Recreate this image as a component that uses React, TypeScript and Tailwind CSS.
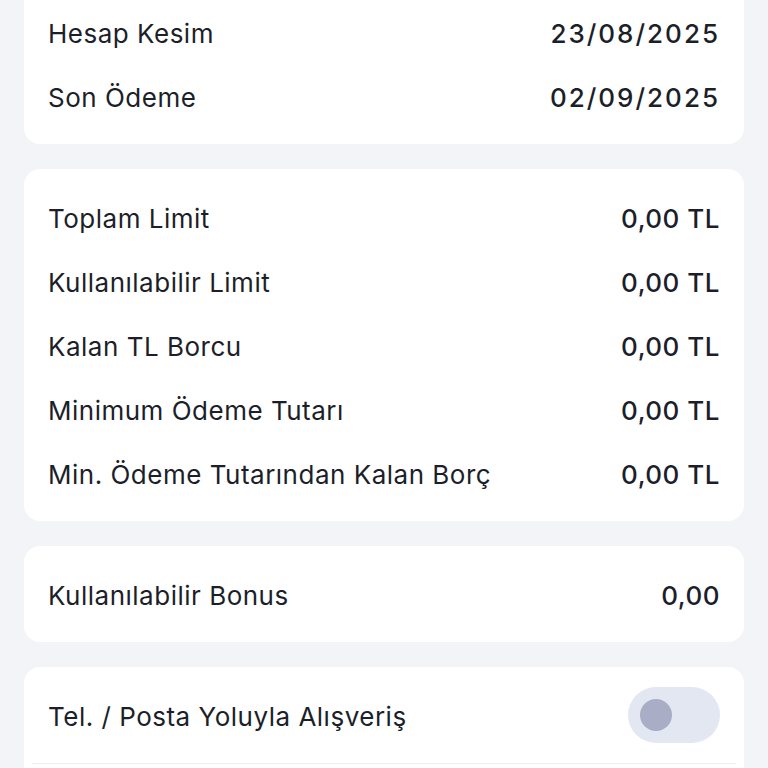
const rows1 = [
  { label: 'Hesap Kesim', value: '23/08/2025' },
  { label: 'Son Ödeme', value: '02/09/2025' },
];

const rows2 = [
  { label: 'Toplam Limit', value: '0,00 TL' },
  { label: 'Kullanılabilir Limit', value: '0,00 TL' },
  { label: 'Kalan TL Borcu', value: '0,00 TL' },
  { label: 'Minimum Ödeme Tutarı', value: '0,00 TL' },
  { label: 'Min. Ödeme Tutarından Kalan Borç', value: '0,00 TL' },
];

const Row = ({ label, value, wide }: { label: string; value: string; wide?: boolean }) => (
  <div className="flex h-16 items-center justify-between px-6 pt-[2px]">
    <span className="text-[26px] tracking-[0.5px] text-[#1c1f2a]">{label}</span>
    <span
      className={`text-[26px] font-medium text-[#1c1f2a] ${wide ? 'tracking-[2px]' : 'tracking-[0.5px]'}`}
    >
      {value}
    </span>
  </div>
);

const Card = ({ children, className = '' }: { children: React.ReactNode; className?: string }) => (
  <div className={`rounded-2xl bg-white py-4 ${className}`}>{children}</div>
);

export default function App() {
  return (
    <div
      className="h-[768px] overflow-hidden bg-[#f3f4f8] px-6"
      style={{ fontFamily: 'Inter, "Noto Sans", sans-serif' }}
    >
      <div className="-mt-[16px] flex flex-col gap-[25px]">
        <Card>
          {rows1.map((r) => (
            <Row key={r.label} {...r} wide />
          ))}
        </Card>
        <Card>
          {rows2.map((r) => (
            <Row key={r.label} {...r} />
          ))}
        </Card>
        <Card>
          <Row label="Kullanılabilir Bonus" value="0,00" />
        </Card>
        <Card className="pb-0">
          <div className="flex h-16 items-center justify-between px-6">
            <span className="pt-[2px] text-[26px] tracking-[0.5px] text-[#1c1f2a]">
              Tel. / Posta Yoluyla Alışveriş
            </span>
            <div className="flex h-[56px] w-[92px] items-center rounded-full bg-[#e3e7f2] px-3">
              <div className="h-8 w-8 rounded-full bg-[#a9adc6]" />
            </div>
          </div>
          <div className="mx-2 mt-4 border-t border-[#eef0f5]" />
          <div className="h-16" />
        </Card>
      </div>
    </div>
  );
}
